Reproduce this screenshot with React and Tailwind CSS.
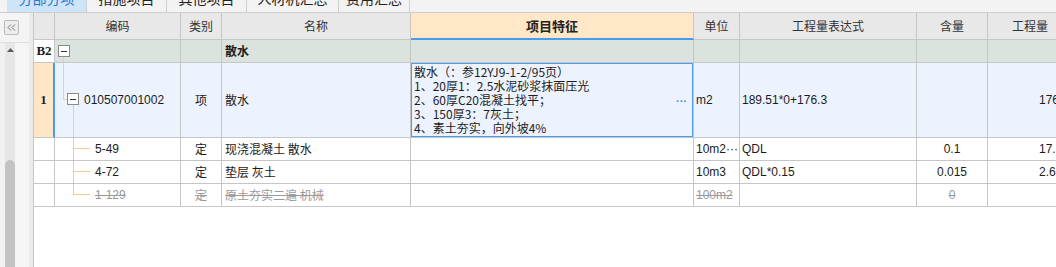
import React from "react";

const ORANGE = "bg-[#ffc98a]";

function MinusBox() {
  return (
    <span className="absolute w-[12px] h-[12px] border border-[#8a8a8a] bg-white flex items-center justify-center">
      <span className="block w-[6px] h-px bg-[#333]" />
    </span>
  );
}

const cell = "border-r border-b border-[#c6c6c6] flex items-center overflow-hidden whitespace-nowrap";

export default function App() {
  const children = [
    { code: "5-49", type: "定", name: "现浇混凝土 散水", unit: "10m2···", expr: "QDL", ratio: "0.1", qty: "17.63", last: false, dead: false },
    { code: "4-72", type: "定", name: "垫层 灰土", unit: "10m3", expr: "QDL*0.15", ratio: "0.015", qty: "2.645", last: false, dead: false },
    { code: "1-129", type: "定", name: "原土夯实二遍 机械", unit: "100m2", expr: "", ratio: "0", qty: "", last: true, dead: true },
  ];

  const features = [
    "散水（：参12YJ9-1-2/95页）",
    "1、20厚1：2.5水泥砂浆抹面压光",
    "2、60厚C20混凝土找平；",
    "3、150厚3：7灰土；",
    "4、素土夯实，向外坡4%",
  ];

  return (
    <div className="w-[1056px] h-[267px] overflow-hidden bg-white flex flex-col font-['Liberation_Sans','Noto_Sans_CJK_SC',sans-serif] text-[12px] text-[#1c1c1c]">
      {/* tab strip, scrolled so only its lower edge shows */}
      <div className="h-[13px] shrink-0 overflow-hidden border-b border-[#cdcdcd] bg-[#f3f3f3]">
        <div className="-mt-[16px] flex h-[28px] pl-[7px] text-[14px] text-[#222] font-['Noto_Sans_CJK_SC',sans-serif]">
          <div className="w-[79px] flex items-center justify-center bg-[#cde4f9] text-[#2b78cf]">分部分项</div>
          <div className="w-[80px] border-l border-[#cfcfcf] flex items-center justify-center">措施项目</div>
          <div className="w-[80px] border-l border-[#cfcfcf] flex items-center justify-center">其他项目</div>
          <div className="w-[92px] border-l border-[#cfcfcf] flex items-center justify-center">人材机汇总</div>
          <div className="w-[71px] border-l border-[#cfcfcf] flex items-center justify-center">费用汇总</div>
          <div className="border-l border-[#cfcfcf]" />
        </div>
      </div>

      <div className="flex flex-1 min-h-0">
        {/* left side panel */}
        <div className="w-[34px] shrink-0 flex border-r border-[#c6c6c6]">
          <div className="w-[29px] flex flex-col bg-[#f4f4f4]">
            <div className="h-[30px] shrink-0 border-b border-[#dedede] pl-[4px] pt-[7px]">
              <div className="w-[15px] h-[15px] rounded-[2px] border border-[#b9b9b9] bg-[#ededed] flex items-center justify-center">
                <svg width="9" height="7" viewBox="0 0 9 7" fill="none" stroke="#777" strokeWidth="1">
                  <path d="M4 0.5 L1 3.5 L4 6.5" />
                  <path d="M8 0.5 L5 3.5 L8 6.5" />
                </svg>
              </div>
            </div>
            <div className="flex flex-1 min-h-0">
              <div className="w-[5px] bg-[#f1f1f1]" />
              <div className="w-[10px] bg-[#e6e6e6] flex flex-col items-center">
                <svg className="mt-[5px] shrink-0" width="7" height="4" viewBox="0 0 7 4">
                  <path d="M0 4 L3.5 0 L7 4 Z" fill="#5a5a5a" />
                </svg>
                <div className="mt-[108px] w-[10px] flex-1 rounded-t-[5px] bg-[#c3c3c3]" />
              </div>
              <div className="flex-1 bg-[#f5f5f5]" />
            </div>
          </div>
          <div className="flex-1 bg-[#ebebeb]" />
        </div>

        {/* grid */}
        <div className="flex-1 overflow-hidden">
          {/* header */}
          <div className="grid grid-cols-[21px_126px_41px_189px_283px_46px_177px_71px_85px] h-[27px] bg-[#e8e8e8] text-[#333] font-['Noto_Sans_CJK_SC',sans-serif]">
            <div className={cell} />
            <div className={`${cell} justify-center`}>编码</div>
            <div className={`${cell} justify-center`}>类别</div>
            <div className={`${cell} justify-center`}>名称</div>
            <div className="border-r border-b-2 border-r-[#c6c6c6] border-b-[#4a9af0] bg-[#ffe7c7] flex items-center justify-center text-[13px] font-bold text-[#222]">项目特征</div>
            <div className={`${cell} justify-center`}>单位</div>
            <div className={`${cell} justify-center`}>工程量表达式</div>
            <div className={`${cell} justify-center`}>含量</div>
            <div className={`${cell} justify-center`}>工程量</div>
          </div>

          {/* B2 section */}
          <div className="grid grid-cols-[21px_126px_41px_189px_283px_46px_177px_71px_85px] h-[23px] bg-[#dae3de]">
            <div className={`${cell} justify-center bg-white font-['Liberation_Serif',serif] font-bold text-[13px]`}>B2</div>
            <div className={`${cell} relative`}>
              <span className="absolute left-[3px] top-[5px]"><MinusBox /></span>
              <span className={`absolute left-[8px] top-[17px] bottom-0 w-px ${ORANGE}`} />
            </div>
            <div className={cell} />
            <div className={`${cell} pl-[3px] font-bold font-['Noto_Sans_CJK_SC',sans-serif]`}>散水</div>
            <div className={cell} />
            <div className={cell} />
            <div className={cell} />
            <div className={cell} />
            <div className={cell} />
          </div>

          {/* list item */}
          <div className="grid grid-cols-[21px_126px_41px_189px_283px_46px_177px_71px_85px] h-[75px] bg-[#edf3fe]">
            <div className="border-r-2 border-b border-r-[#4a9af0] border-b-[#c6c6c6] bg-[#ffe6c6] flex items-center justify-center font-['Liberation_Serif',serif] font-bold text-[13px]">1</div>
            <div className={`${cell} relative pl-[29px]`}>
              <span className={`absolute left-[8px] -top-px h-[37px] w-px ${ORANGE}`} />
              <span className={`absolute left-[8px] top-[36px] h-px w-[4px] ${ORANGE}`} />
              <span className="absolute left-[12px] top-[30px]"><MinusBox /></span>
              <span className={`absolute left-[18px] top-[42px] bottom-0 w-px ${ORANGE}`} />
              010507001002
            </div>
            <div className={`${cell} justify-center font-['Noto_Sans_CJK_SC',sans-serif]`}>项</div>
            <div className={`${cell} pl-[3px] font-['Noto_Sans_CJK_SC',sans-serif]`}>散水</div>
            <div className={`${cell} relative items-start`}>
              <div className="pl-[3px] pt-[2px] leading-[14px] font-['Noto_Sans_CJK_SC',sans-serif] text-[12px]">
                {features.map((t) => (
                  <div key={t}>{t}</div>
                ))}
              </div>
              <span className="absolute right-[6px] top-[30px] text-[#3a8ee6] text-[11px] font-bold">···</span>
              <span className="absolute -inset-px border-2 border-[#4a9af0]" />
            </div>
            <div className={`${cell} pl-[2px]`}>m2</div>
            <div className={`${cell} pl-[2px]`}>189.51*0+176.3</div>
            <div className={cell} />
            <div className={`${cell} justify-end pr-[3px]`}>176.3</div>
          </div>

          {children.map((r) => {
            const txt = r.dead ? "text-[#9a9a9a] line-through" : "";
            return (
              <div key={r.code} className="grid grid-cols-[21px_126px_41px_189px_283px_46px_177px_71px_85px] h-[23px] bg-white">
                <div className={cell} />
                <div className={`${cell} relative pl-[40px] ${txt}`}>
                  <span className={`absolute left-[18px] -top-px w-px ${ORANGE} ${r.last ? "h-[12px]" : "h-[24px]"}`} />
                  <span className={`absolute left-[18px] top-[10px] h-px w-[17px] ${ORANGE}`} />
                  {r.code}
                </div>
                <div className={`${cell} justify-center font-['Noto_Sans_CJK_SC',sans-serif] ${txt}`}>{r.type}</div>
                <div className={`${cell} pl-[3px] font-['Noto_Sans_CJK_SC',sans-serif] ${txt}`}>{r.name}</div>
                <div className={cell} />
                <div className={`${cell} pl-[2px] ${txt}`}>{r.unit}</div>
                <div className={`${cell} pl-[2px]`}>{r.expr}</div>
                <div className={`${cell} justify-center ${txt}`}>{r.ratio}</div>
                <div className={`${cell} justify-end pr-[3px]`}>{r.qty}</div>
              </div>
            );
          })}
        </div>
      </div>
    </div>
  );
}
